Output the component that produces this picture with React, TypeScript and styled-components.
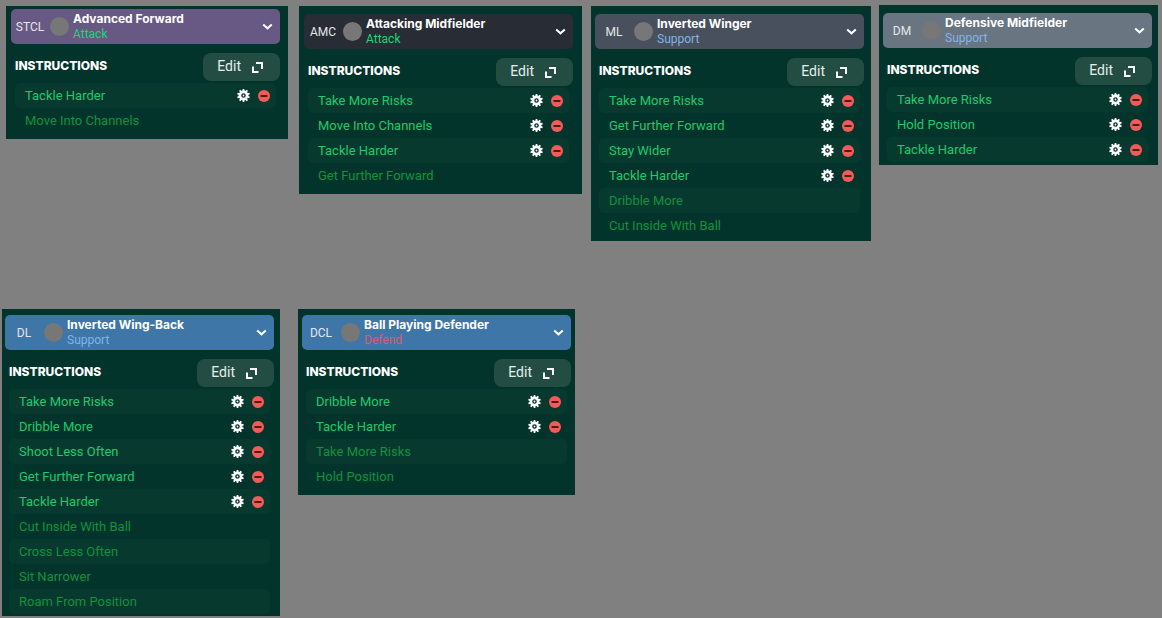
import React from 'react';
import styled, { createGlobalStyle } from 'styled-components';

const GlobalStyle = createGlobalStyle`
  * { box-sizing: border-box; }
  body {
    margin: 0;
    background: #808080;
    font-family: Roboto, "Liberation Sans", sans-serif;
  }
  button { font: inherit; color: inherit; border: 0; padding: 0; cursor: pointer; }
`;

type Duty = 'Attack' | 'Support' | 'Defend';

interface Role {
  position: string;
  name: string;
  duty: Duty;
  tone: string;
  active: string[];
  locked: string[];
  grow: number;
  gutter: number;
  drop?: number;
  inset: string;
}

const dutyColors: Record<Duty, string> = {
  Attack: '#22d477',
  Support: '#83b2ea',
  Defend: '#e0586a',
};

const frontRoles: Role[] = [
  {
    position: 'STCL', name: 'Advanced Forward', duty: 'Attack', tone: '#675984',
    active: ['Tackle Harder'], locked: ['Move Into Channels'],
    grow: 282, gutter: 6, drop: 1, inset: '3px 8px 6px 5px',
  },
  {
    position: 'AMC', name: 'Attacking Midfielder', duty: 'Attack', tone: '#272c35',
    active: ['Take More Risks', 'Move Into Channels', 'Tackle Harder'], locked: ['Get Further Forward'],
    grow: 283, gutter: 11, drop: 1, inset: '8px 9px 6px 5px',
  },
  {
    position: 'ML', name: 'Inverted Winger', duty: 'Support', tone: '#47505c',
    active: ['Take More Risks', 'Get Further Forward', 'Stay Wider', 'Tackle Harder'],
    locked: ['Dribble More', 'Cut Inside With Ball'],
    grow: 280, gutter: 9, drop: 1, inset: '8px 7px 3px 4px',
  },
  {
    position: 'DM', name: 'Defensive Midfielder', duty: 'Support', tone: '#697682',
    active: ['Take More Risks', 'Hold Position', 'Tackle Harder'], locked: [],
    grow: 279, gutter: 8, inset: '8px 6px 3px 4px',
  },
];

const backRoles: Role[] = [
  {
    position: 'DL', name: 'Inverted Wing-Back', duty: 'Support', tone: '#3f76a8',
    active: ['Take More Risks', 'Dribble More', 'Shoot Less Often', 'Get Further Forward', 'Tackle Harder'],
    locked: ['Cut Inside With Ball', 'Cross Less Often', 'Sit Narrower', 'Roam From Position'],
    grow: 278, gutter: 2, inset: '6px 6px 2px 3px',
  },
  {
    position: 'DCL', name: 'Ball Playing Defender', duty: 'Defend', tone: '#3f76a8',
    active: ['Dribble More', 'Tackle Harder'], locked: ['Take More Risks', 'Hold Position'],
    grow: 277, gutter: 18, inset: '6px 4px 6px 4px',
  },
];

const Page = styled.main`
  display: flex;
  flex-direction: column;
`;

const Line = styled.section<{ $minHeight?: number; $spare?: number }>`
  display: flex;
  align-items: flex-start;
  min-height: ${p => p.$minHeight ?? 0}px;
  padding: ${p => (p.$spare ? '0' : '5px 4px 0 0')};
  &::after {
    content: '';
    display: ${p => (p.$spare ? 'block' : 'none')};
    flex: ${p => p.$spare ?? 0} 1 ${p => p.$spare ?? 0}px;
  }
`;

const Panel = styled.article<{ $grow: number; $gutter: number; $drop: number; $inset: string }>`
  flex: ${p => p.$grow} 1 ${p => p.$grow}px;
  min-width: 0;
  margin-left: ${p => p.$gutter}px;
  margin-top: ${p => p.$drop}px;
  padding: ${p => p.$inset};
  background: #02342b;
`;

const RoleButton = styled.button<{ $tone: string }>`
  display: flex;
  align-items: center;
  width: 100%;
  height: 35px;
  padding-right: 7px;
  border-radius: 5px;
  background: ${p => p.$tone};
  text-align: left;
`;

const Position = styled.span`
  width: 38px;
  font-size: 12px;
  line-height: 16px;
  text-align: center;
  color: #e3e6ea;
`;

const Token = styled.span`
  width: 19px;
  height: 19px;
  margin: 0 4px 0 1px;
  border-radius: 50%;
  background: #777777;
`;

const Names = styled.span`
  display: flex;
  flex: 1;
  min-width: 0;
  flex-direction: column;
  white-space: nowrap;
`;

const RoleName = styled.strong`
  font-family: Inter, sans-serif;
  font-size: 12px;
  font-weight: 700;
  line-height: 15px;
  color: #ffffff;
`;

const DutyName = styled.span<{ $duty: Duty }>`
  font-size: 12px;
  line-height: 16px;
  color: ${p => dutyColors[p.$duty]};
`;

const Bar = styled.div`
  display: flex;
  align-items: center;
  justify-content: space-between;
  margin: 9px 0 2px;
  padding-left: 4px;
`;

const Heading = styled.h2`
  margin: 0;
  padding-bottom: 2px;
  font-family: Inter, sans-serif;
  font-size: 12px;
  font-weight: 800;
  line-height: 16px;
  color: #ffffff;
`;

const EditButton = styled.button`
  display: flex;
  align-items: center;
  gap: 11px;
  height: 28px;
  padding: 0 17px 0 14px;
  border-radius: 8px;
  background: #234d43;
  color: #e6eeec;
`;

const EditLabel = styled.span`
  padding-bottom: 2px;
  font-size: 14px;
  line-height: 16px;
`;

const List = styled.ul`
  margin: 0 4px;
  padding: 0;
  list-style: none;
`;

const Item = styled.li<{ $locked: boolean }>`
  display: flex;
  align-items: center;
  gap: 8px;
  height: 25px;
  padding: 0 6px 0 10px;
  border-radius: 5px;
  color: ${p => (p.$locked ? '#11923c' : '#20c96c')};
  font-size: 13px;
  line-height: 24px;
  white-space: nowrap;
  &:nth-child(odd) { background: #07392f; }
`;

const ItemName = styled.span`
  flex: 1;
  min-width: 0;
`;

const IconButton = styled.button`
  display: flex;
  background: none;
`;

const Chevron = () => (
  <svg width="11" height="7" viewBox="0 0 11 7" aria-hidden="true">
    <path d="M1.2 1.5 5.5 5.3 9.8 1.5" fill="none" stroke="#fff" strokeWidth="2" />
  </svg>
);

const Expand = () => (
  <svg width="11" height="11" viewBox="0 0 11 11" aria-hidden="true">
    <path d="M4 1H10V7M1 4.5V10H6.5" fill="none" stroke="#fff" strokeWidth="2" />
  </svg>
);

const toothAngles = [0, 36, 72, 108, 144, 180, 216, 252, 288, 324];

const Gear = () => (
  <svg width="13" height="13" viewBox="0 0 13 13" aria-hidden="true">
    {toothAngles.map(a => (
      <path key={a} d="M5.4 2.4 5.7 0.1H7.3L7.6 2.4Z" fill="#fff" transform={`rotate(${a} 6.5 6.5)`} />
    ))}
    <circle cx="6.5" cy="6.5" r="3.6" fill="none" stroke="#fff" strokeWidth="2.6" />
    <circle cx="6.5" cy="6.5" r="0.9" fill="#fff" />
  </svg>
);

const Minus = () => (
  <svg width="12" height="12" viewBox="0 0 12 12" aria-hidden="true">
    <circle cx="6" cy="6" r="6" fill="#f35b58" />
    <path d="M2.5 6H9.5" stroke="#3a1512" strokeWidth="1.8" />
  </svg>
);

function RolePanel({ role }: { role: Role }) {
  const items = [...role.active, ...role.locked];
  return (
    <Panel $grow={role.grow} $gutter={role.gutter} $drop={role.drop ?? 0} $inset={role.inset}>
      <RoleButton type="button" aria-haspopup="listbox" $tone={role.tone}>
        <Position>{role.position}</Position>
        <Token />
        <Names>
          <RoleName>{role.name}</RoleName>
          <DutyName $duty={role.duty}>{role.duty}</DutyName>
        </Names>
        <Chevron />
      </RoleButton>
      <Bar>
        <Heading>INSTRUCTIONS</Heading>
        <EditButton type="button">
          <EditLabel>Edit</EditLabel>
          <Expand />
        </EditButton>
      </Bar>
      <List>
        {items.map((item, i) => {
          const locked = i >= role.active.length;
          return (
            <Item key={item} $locked={locked}>
              <ItemName>{item}</ItemName>
              {!locked && (
                <>
                  <IconButton type="button" aria-label={`Configure ${item}`}><Gear /></IconButton>
                  <IconButton type="button" aria-label={`Remove ${item}`}><Minus /></IconButton>
                </>
              )}
            </Item>
          );
        })}
      </List>
    </Panel>
  );
}

export default function App() {
  return (
    <>
      <GlobalStyle />
      <Page>
        <Line $minHeight={309}>
          {frontRoles.map(role => <RolePanel key={role.position} role={role} />)}
        </Line>
        <Line $spare={587}>
          {backRoles.map(role => <RolePanel key={role.position} role={role} />)}
        </Line>
      </Page>
    </>
  );
}
